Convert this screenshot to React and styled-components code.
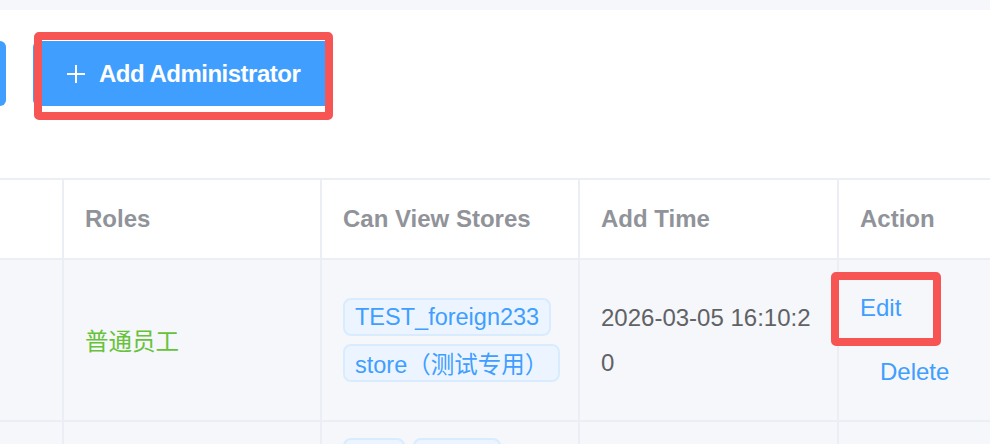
import React from 'react';
import styled, { createGlobalStyle } from 'styled-components';

const GlobalStyle = createGlobalStyle`
  html, body {
    margin: 0;
    padding: 0;
    background: #ffffff;
    overflow: hidden;
  }
  body {
    font-family: "Liberation Sans", "Noto Sans CJK SC", sans-serif;
  }
  * {
    box-sizing: border-box;
  }
`;

const Page = styled.div`
  width: 990px;
  height: 444px;
  overflow: hidden;
  background: #f5f7fa;
  padding-top: 10px;
`;

const Panel = styled.div`
  background: #ffffff;
  min-height: 100%;
`;

const Toolbar = styled.div`
  display: flex;
  align-items: center;
  gap: 27px;
  padding: 31px 0 72px;
`;

const PrimaryButton = styled.button`
  position: relative;
  flex-shrink: 0;
  height: 65px;
  padding: 0 33px;
  margin-left: ${(p) => p.$offset || 0}px;
  width: ${(p) => (p.$width ? p.$width + 'px' : 'auto')};
  display: inline-flex;
  align-items: center;
  gap: 13px;
  background: #409eff;
  color: #ffffff;
  border: none;
  border-radius: 6px;
  font-family: inherit;
  font-size: 24px;
  font-weight: 700;
  letter-spacing: -0.5px;
  white-space: nowrap;
  overflow: visible;
`;

const Highlight = styled.span`
  position: absolute;
  left: ${(p) => p.$x}px;
  top: ${(p) => p.$y}px;
  width: ${(p) => p.$w}px;
  height: ${(p) => p.$h}px;
  border: 8px solid #f75454;
  border-radius: 5px;
  pointer-events: none;
`;

const Table = styled.div`
  border-top: 2px solid #ebeef5;
`;

const Row = styled.div`
  display: grid;
  grid-template-columns: 64px 258px 258px 259px 1fr;
  border-bottom: 2px solid #ebeef5;
  background: ${(p) => (p.$head ? '#ffffff' : '#f5f7fa')};
  min-height: ${(p) => (p.$head ? '80px' : '0')};
`;

const Cell = styled.div`
  display: flex;
  align-items: center;
  padding: ${(p) => (p.$head ? '0 19px 0 21px' : '16px 19px 16px 21px')};
  border-right: ${(p) => (p.$last ? 'none' : '2px solid #ebeef5')};
  font-size: 24px;
  color: ${(p) => (p.$head ? '#909399' : '#606266')};
  font-weight: ${(p) => (p.$head ? 700 : 400)};
  white-space: nowrap;
`;

const RoleText = styled.span`
  color: #67c23a;
  font-size: 23.5px;
`;

const TagList = styled.div`
  display: flex;
  flex-wrap: wrap;
  gap: 8px;
  width: 100%;
`;

const Tag = styled.span`
  flex-shrink: 0;
  display: inline-flex;
  align-items: center;
  height: 38px;
  padding: 0 10px;
  background: #ecf5ff;
  border: 2px solid #d9ecff;
  border-radius: 8px;
  color: #409eff;
  font-size: 23.5px;
  white-space: nowrap;
`;

const DateText = styled.div`
  white-space: normal;
  word-break: break-all;
  line-height: 45px;
  width: 100%;
`;

const Actions = styled.div`
  display: flex;
  flex-direction: column;
  align-items: flex-start;
`;

const TextButton = styled.button`
  position: relative;
  padding: 20px 0;
  margin-left: ${(p) => (p.$indent ? '20px' : '0')};
  background: none;
  border: none;
  font-family: inherit;
  font-size: 24px;
  line-height: 24px;
  color: #409eff;
`;

const PlusIcon = () => (
  <svg width="20" height="20" viewBox="0 0 20 20" fill="none">
    <path d="M10 1v18M1 10h18" stroke="#ffffff" strokeWidth="2" />
  </svg>
);

const rows = [
  {
    role: '普通员工',
    stores: ['TEST_foreign233', 'store（测试专用）'],
    time: '2026-03-05 16:10:20',
    highlight: true,
  },
  {
    role: '店长',
    stores: ['test', 'shop1', 'store（测试专用）', 'TEST_foreign233'],
    time: '2026-03-04 11:22:35',
    highlight: false,
  },
];

export default function App() {
  return (
    <Page>
      <GlobalStyle />
      <Panel>
        <Toolbar>
          <PrimaryButton $offset={-114} $width={120} aria-label="Search" />
          <PrimaryButton>
            <PlusIcon />
            Add Administrator
            <Highlight $x={1} $y={-9} $w={299} $h={88} />
          </PrimaryButton>
        </Toolbar>
        <Table>
          <Row $head>
            <Cell $head />
            <Cell $head>Roles</Cell>
            <Cell $head>Can View Stores</Cell>
            <Cell $head>Add Time</Cell>
            <Cell $head $last>Action</Cell>
          </Row>
          {rows.map((r, i) => (
            <Row key={i}>
              <Cell />
              <Cell>
                <RoleText>{r.role}</RoleText>
              </Cell>
              <Cell>
                <TagList>
                  {r.stores.map((s) => (
                    <Tag key={s}>{s}</Tag>
                  ))}
                </TagList>
              </Cell>
              <Cell>
                <DateText>{r.time}</DateText>
              </Cell>
              <Cell $last>
                <Actions>
                  <TextButton>
                    Edit
                    {r.highlight && <Highlight $x={-29} $y={-4} $w={110} $h={74} />}
                  </TextButton>
                  <TextButton $indent>Delete</TextButton>
                </Actions>
              </Cell>
            </Row>
          ))}
        </Table>
      </Panel>
    </Page>
  );
}
